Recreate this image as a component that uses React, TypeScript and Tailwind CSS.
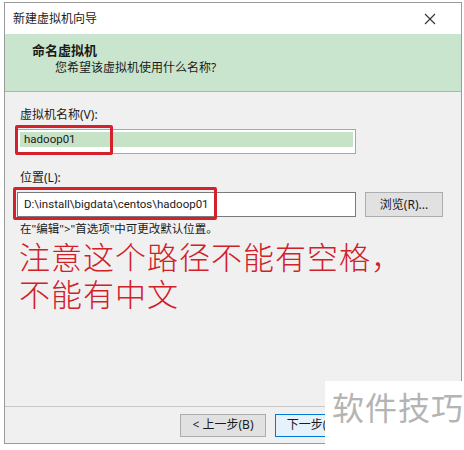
import React from "react";

const cjk = { fontFamily: '"Noto Sans", "Noto Sans CJK SC", sans-serif' };
const latin = { fontFamily: 'Roboto, "Noto Sans CJK SC", sans-serif' };

const App = () => {
  return (
    <div className="relative w-[464px] h-[450px] overflow-hidden bg-white text-[#1a1a1a]" style={cjk}>
      {/* Dialog window */}
      <div className="ml-[4px] mt-[2px] w-[458px] h-[442px] border border-[#9a9a9a] flex flex-col bg-[#f0f0f0]">
        {/* Title bar */}
        <div className="h-[31px] bg-white flex items-center justify-between pl-[8px] pr-[20px] shrink-0">
          <span className="text-[12px] leading-none">新建虚拟机向导</span>
          <svg width="12" height="12" viewBox="0 0 12 12" className="mr-[5px]">
            <path d="M1 1 L11 11 M11 1 L1 11" stroke="#333" strokeWidth="1.1" />
          </svg>
        </div>

        {/* Green header */}
        <div className="h-[58px] bg-[#cae5cd] border-b border-[#a8b8aa] shrink-0 pl-[27px] pt-[7px]">
          <div className="text-[13px] font-bold leading-[18px]">命名虚拟机</div>
          <div className="text-[12px] leading-[18px] pl-[23px]">您希望该虚拟机使用什么名称?</div>
        </div>

        {/* Body */}
        <div className="flex-1 pl-[12px] pr-[16px] pt-[14px]">
          <div className="text-[12px] leading-[18px] pl-[3px]">虚拟机名称(V):</div>
          <div className="relative mt-[5px] w-[339px] h-[25px] border border-[#7fb3d6] bg-white p-[2px]">
            <div className="h-[15px] bg-[#c6e3c8] flex items-center pl-[4px] text-[11.5px]" style={latin}>hadoop01</div>
            <div className="absolute left-[-3px] top-[-5px] w-[98px] h-[30px] border-[3px] border-[#d3222c] rounded-[2px]" />
          </div>

          <div className="text-[12px] leading-[18px] pl-[3px] mt-[15px]">位置(L):</div>
          <div className="flex items-center mt-[5px]">
            <div className="relative w-[339px] h-[25px] border border-[#7a7a7a] bg-white flex items-center pl-[6px] text-[11.5px]" style={latin}>
              D:\install\bigdata\centos\hadoop01
              <div className="absolute left-[-5px] top-[-6px] w-[204px] h-[33px] border-[3px] border-[#d3222c] rounded-[2px]" />
            </div>
            <div className="ml-[9px] w-[78px] h-[25px] border border-[#adadad] bg-[#e1e1e1] flex items-center justify-center text-[12px]">
              浏览(R)...
            </div>
          </div>

          <div className="text-[11.5px] leading-[16px] pl-[3px] mt-[4px]">在"编辑"&gt;"首选项"中可更改默认位置。</div>
          <div className="text-[#d0202a] text-[31px] font-light leading-[37px] pl-[2px] mt-[2px] tracking-[1px]">
            注意这个路径不能有空格，
            <br />
            不能有中文
          </div>
        </div>

        {/* Footer */}
        <div className="h-[37px] border-t border-[#c8c8c8] shrink-0 flex items-center pl-[175px] gap-[9px]">
          <div className="w-[86px] h-[23px] border border-[#adadad] bg-[#e1e1e1] flex items-center justify-center text-[12px]">
            &lt; 上一步(B)
          </div>
          <div className="w-[86px] h-[23px] border border-[#0078d7] bg-[#e5f1fb] flex items-center justify-center text-[12px]">
            下一步(N) &gt;
          </div>
        </div>
      </div>

      {/* Watermark */}
      <div className="absolute left-[325px] top-[381px] w-[139px] h-[69px] bg-white pl-[7px] pt-[9px]">
        <span className="text-[32px] leading-[36px] text-[#b4b4b4] tracking-[1px]">软件技巧</span>
      </div>
    </div>
  );
};

export default App;
